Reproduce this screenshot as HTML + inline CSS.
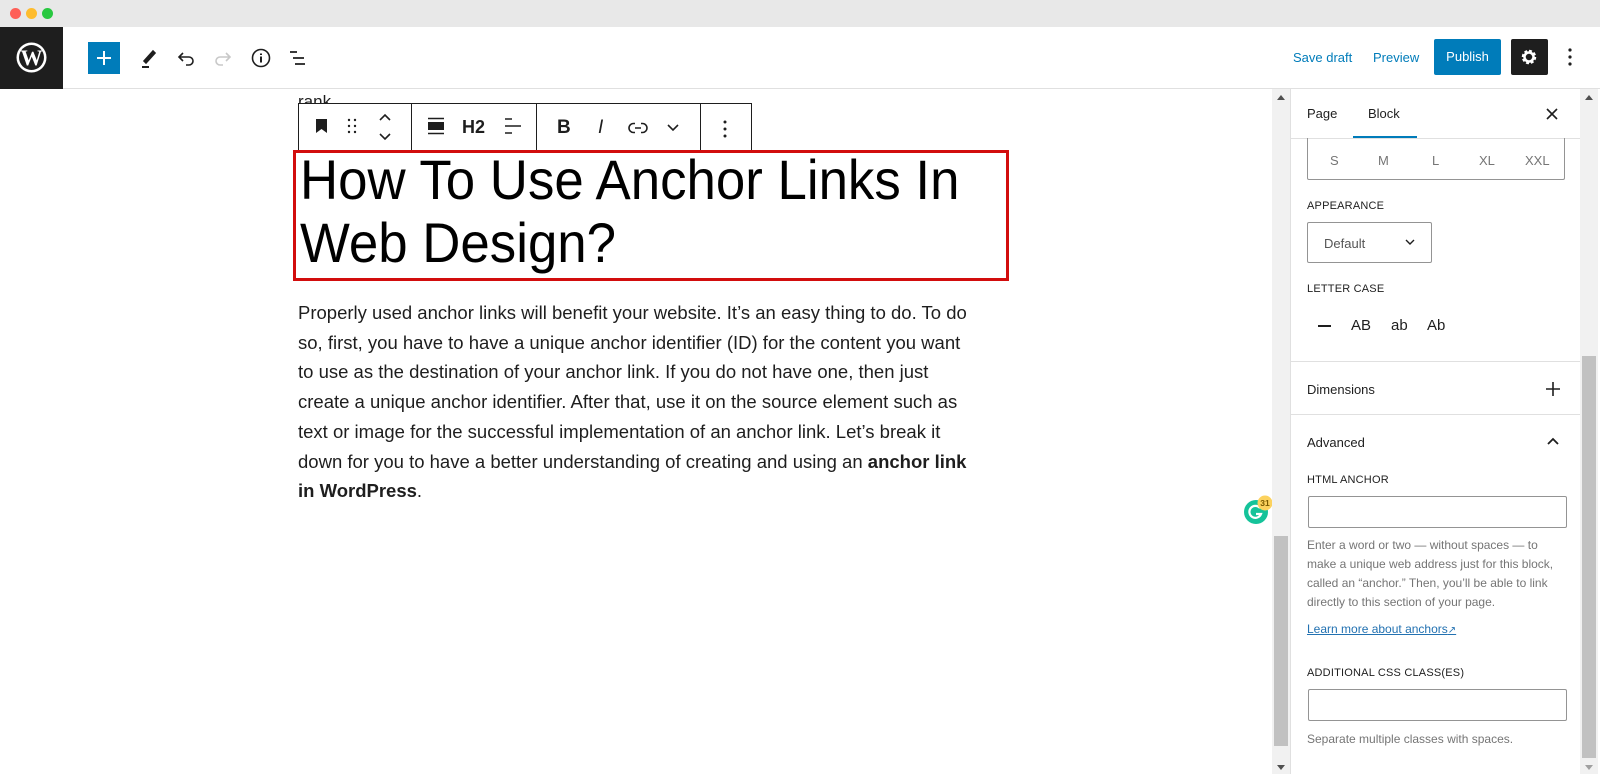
<!DOCTYPE html>
<html><head><meta charset="utf-8"><style>
*{box-sizing:border-box;margin:0;padding:0}
body{width:1600px;height:774px;overflow:hidden;background:#fff;font-family:"Liberation Sans",sans-serif;position:relative;color:#1e1e1e}
.a{position:absolute}
.ic{position:absolute;stroke:#1e1e1e;fill:none;stroke-width:1.6}
.lab{position:absolute;font-size:11px;color:#1e1e1e;letter-spacing:.2px}
.help{position:absolute;left:1307px;font-size:12px;color:#757575;line-height:19px}
.para{position:absolute;left:298px;top:298px;font-size:18.5px;line-height:29.7px;color:#1e1e1e;transform:scaleX(1.0);transform-origin:left top;white-space:nowrap}
</style></head><body>
<div class="a" style="left:0;top:0;width:1600px;height:27px;background:#e8e8e8"></div>
<div class="a" style="left:10px;top:8px;width:11px;height:11px;border-radius:50%;background:#fe5f57"></div>
<div class="a" style="left:26px;top:8px;width:11px;height:11px;border-radius:50%;background:#febc2e"></div>
<div class="a" style="left:42px;top:8px;width:11px;height:11px;border-radius:50%;background:#28c840"></div>
<div class="a" style="left:0;top:88px;width:1600px;height:1px;background:#e0e0e0"></div>
<div class="a" style="left:0;top:27px;width:63px;height:62px;background:#1e1e1e"></div>
<svg class="a" style="left:15px;top:41px" width="33" height="33" viewBox="0 0 33 33"><circle cx="16.5" cy="16.5" r="15" fill="#fff"/><circle cx="16.5" cy="16.5" r="12.5" fill="#1e1e1e"/><text x="16.5" y="24" font-family="Liberation Serif" font-size="22" font-weight="bold" fill="#fff" text-anchor="middle">W</text></svg>
<div class="a" style="left:88px;top:42px;width:32px;height:32px;background:#007cba"></div>
<svg class="a" style="left:94px;top:48px" width="20" height="20"><path d="M10 3v14M3 10h14" stroke="#fff" stroke-width="2"/></svg>
<svg class="ic" style="left:138px;top:46px" width="22" height="24"><path d="M6 15 15 5l2 2-9 10z" fill="#1e1e1e"/><path d="M4 21h7" stroke-width="2"/></svg>
<svg class="ic" style="left:175px;top:48px" width="22" height="20"><path d="M5 9h9a4 4 0 0 1 0 8h-3M8 5 4 9l4 4"/></svg>
<svg class="ic" style="left:212px;top:48px;stroke:#c8c8c8" width="22" height="20"><path d="M17 9H8a4 4 0 0 0 0 8h3M14 5l4 4-4 4"/></svg>
<svg class="ic" style="left:250px;top:47px" width="22" height="22"><circle cx="11" cy="11" r="8.5"/><path d="M11 9.5v6M11 6.5v1.5" stroke-width="2"/></svg>
<svg class="ic" style="left:287px;top:48px" width="22" height="20"><path d="M3 4h7M6 10h11M8 16h10" stroke-width="1.8"/></svg>
<div class="a" style="left:1293px;top:50px;font-size:13px;color:#007cba">Save draft</div>
<div class="a" style="left:1373px;top:50px;font-size:13px;color:#007cba">Preview</div>
<div class="a" style="left:1434px;top:39px;width:67px;height:36px;background:#007cba;border-radius:2px;color:#fff;font-size:13px;text-align:center;line-height:36px">Publish</div>
<div class="a" style="left:1511px;top:39px;width:37px;height:36px;background:#1e1e1e;border-radius:2px"></div>
<svg class="a" style="left:1519px;top:47px" width="20" height="20" viewBox="0 0 20 20"><circle cx="10" cy="10" r="5.5" fill="none" stroke="#fff" stroke-width="3.5" stroke-dasharray="2.6 1.7"/><circle cx="10" cy="10" r="4.5" fill="none" stroke="#fff" stroke-width="2.5"/></svg>
<svg class="a" style="left:1566px;top:46px" width="8" height="22"><circle cx="4" cy="4" r="1.6" fill="#1e1e1e"/><circle cx="4" cy="11" r="1.6" fill="#1e1e1e"/><circle cx="4" cy="18" r="1.6" fill="#1e1e1e"/></svg>

<div class="a" style="left:298px;top:93px;width:50px;height:10px;overflow:hidden;font-size:17px;line-height:17px">rank</div>
<div class="a" style="left:298px;top:103px;width:454px;height:48px;border:1px solid #1e1e1e;border-bottom:none;background:#fff"></div>
<div class="a" style="left:411px;top:103px;width:1px;height:48px;background:#1e1e1e"></div>
<div class="a" style="left:536px;top:103px;width:1px;height:48px;background:#1e1e1e"></div>
<div class="a" style="left:700px;top:103px;width:1px;height:48px;background:#1e1e1e"></div>
<svg class="a" style="left:315px;top:118px" width="14" height="16"><path d="M1 1h11v14l-5.5-4L1 15z" fill="#1e1e1e"/></svg>
<svg class="a" style="left:347px;top:118px" width="10" height="16"><g fill="#1e1e1e"><circle cx="2" cy="2" r="1.2"/><circle cx="8" cy="2" r="1.2"/><circle cx="2" cy="8" r="1.2"/><circle cx="8" cy="8" r="1.2"/><circle cx="2" cy="14" r="1.2"/><circle cx="8" cy="14" r="1.2"/></g></svg>
<svg class="ic" style="left:378px;top:112px" width="14" height="30"><path d="M2 8l5-5 5 5M2 22l5 5 5-5"/></svg>
<svg class="a" style="left:427px;top:117px" width="18" height="18"><rect x="1" y="5" width="16" height="8" fill="#1e1e1e"/><path d="M1 1.5h16M1 16.5h16" stroke="#1e1e1e" stroke-width="1.5"/></svg>
<div class="a" style="left:462px;top:117px;font-size:18px;font-weight:bold">H2</div>
<svg class="ic" style="left:504px;top:117px" width="18" height="18"><path d="M1 2h7M1 9h16M1 16h7"/></svg>
<div class="a" style="left:557px;top:117px;font-size:19px;font-weight:bold">B</div>
<div class="a" style="left:598px;top:117px;font-size:19px;font-style:italic">I</div>
<svg class="ic" style="left:628px;top:120px" width="20" height="16"><path d="M7 3.5H5.5a4.5 4.5 0 0 0 0 9H7M13 3.5h1.5a4.5 4.5 0 0 1 0 9H13M7 8h6"/></svg>
<svg class="ic" style="left:666px;top:123px" width="14" height="10"><path d="M2 2l5 5 5-5"/></svg>
<svg class="a" style="left:722px;top:119px" width="6" height="20"><circle cx="3" cy="3" r="1.5" fill="#1e1e1e"/><circle cx="3" cy="10" r="1.5" fill="#1e1e1e"/><circle cx="3" cy="17" r="1.5" fill="#1e1e1e"/></svg>

<div class="a" style="left:293px;top:150px;width:716px;height:131px;border:3px solid #d20d0d"></div>
<div class="a" style="left:300px;top:148px;font-size:56px;line-height:63px;transform:scaleX(.943);transform-origin:left top;white-space:nowrap;color:#000">How To Use Anchor Links In<br>Web Design?</div>
<div class="para">Properly used anchor links will benefit your website. It’s an easy thing to do. To do<br>so, first, you have to have a unique anchor identifier (ID) for the content you want<br>to use as the destination of your anchor link. If you do not have one, then just<br>create a unique anchor identifier. After that, use it on the source element such as<br>text or image for the successful implementation of an anchor link. Let’s break it<br>down for you to have a better understanding of creating and using an <b>anchor link</b><br><b>in WordPress</b>.</div>

<svg class="a" style="left:1243px;top:495px" width="30" height="30"><circle cx="13" cy="17" r="12" fill="#15c39a"/><path d="M17 13a6 6 0 1 0 1 6h-5" stroke="#fff" stroke-width="2.2" fill="none"/><circle cx="22" cy="8" r="7.5" fill="#fcd25e"/><text x="22" y="11" font-size="8.5" font-weight="bold" fill="#7a5a00" text-anchor="middle" font-family="Liberation Sans">31</text></svg>

<div class="a" style="left:1272px;top:89px;width:18px;height:685px;background:#f1f1f1"></div>
<div class="a" style="left:1274px;top:536px;width:14px;height:210px;background:#c1c1c1"></div>
<div class="a" style="left:1277px;top:95px;border:4px solid transparent;border-bottom:5px solid #505050;border-top:none"></div>
<div class="a" style="left:1277px;top:765px;border:4px solid transparent;border-top:5px solid #505050;border-bottom:none"></div>
<div class="a" style="left:1290px;top:89px;width:1px;height:685px;background:#e0e0e0"></div>
<div class="a" style="left:1580px;top:89px;width:18px;height:685px;background:#f1f1f1"></div>
<div class="a" style="left:1582px;top:356px;width:14px;height:402px;background:#c1c1c1"></div>
<div class="a" style="left:1585px;top:95px;border:4px solid transparent;border-bottom:5px solid #505050;border-top:none"></div>
<div class="a" style="left:1585px;top:765px;border:4px solid transparent;border-top:5px solid #a0a0a0;border-bottom:none"></div>

<div class="a" style="left:1307px;top:106px;font-size:13px">Page</div>
<div class="a" style="left:1368px;top:106px;font-size:13px">Block</div>
<div class="a" style="left:1291px;top:138px;width:289px;height:1px;background:#e0e0e0"></div>
<div class="a" style="left:1353px;top:136px;width:64px;height:2px;background:#007cba"></div>
<svg class="ic" style="left:1545px;top:107px" width="14" height="14"><path d="M2 2l10 10M12 2 2 12"/></svg>
<div class="a" style="left:1307px;top:138px;width:258px;height:42px;border:1px solid #949494;border-top:none;border-radius:0 0 2px 2px"></div>
<div class="a" style="left:1307px;top:153px;width:258px;font-size:13px;color:#757575">
<span class="a" style="left:23px">S</span><span class="a" style="left:71px">M</span><span class="a" style="left:125px">L</span><span class="a" style="left:172px">XL</span><span class="a" style="left:218px">XXL</span></div>
<div class="lab" style="left:1307px;top:200px">APPEARANCE</div>
<div class="a" style="left:1307px;top:222px;width:125px;height:41px;border:1px solid #949494;border-radius:2px"></div>
<div class="a" style="left:1324px;top:236px;font-size:13px;color:#555">Default</div>
<svg class="ic" style="left:1405px;top:239px" width="10" height="7"><path d="M1 1l4 4 4-4" stroke-width="1.4"/></svg>
<div class="lab" style="left:1307px;top:283px">LETTER CASE</div>
<div class="a" style="left:1318px;top:325px;width:13px;height:1.5px;background:#1e1e1e"></div>
<div class="a" style="left:1351px;top:317px;font-size:15px">AB</div>
<div class="a" style="left:1391px;top:317px;font-size:15px">ab</div>
<div class="a" style="left:1427px;top:317px;font-size:15px">Ab</div>
<div class="a" style="left:1291px;top:361px;width:289px;height:1px;background:#e0e0e0"></div>
<div class="a" style="left:1307px;top:382px;font-size:13px">Dimensions</div>
<svg class="ic" style="left:1545px;top:381px" width="16" height="16"><path d="M8 1v14M1 8h14"/></svg>
<div class="a" style="left:1291px;top:414px;width:289px;height:1px;background:#e0e0e0"></div>
<div class="a" style="left:1307px;top:435px;font-size:13px">Advanced</div>
<svg class="ic" style="left:1546px;top:437px" width="14" height="9"><path d="M2 7l5-5 5 5" stroke-width="1.8"/></svg>
<div class="lab" style="left:1307px;top:474px">HTML ANCHOR</div>
<div class="a" style="left:1308px;top:496px;width:259px;height:32px;border:1px solid #949494;border-radius:2px"></div>
<div class="help" style="top:536px">Enter a word or two — without spaces — to<br>make a unique web address just for this block,<br>called an “anchor.” Then, you’ll be able to link<br>directly to this section of your page.</div>
<div class="help" style="top:620px;color:#2271b1;text-decoration:underline">Learn more about anchors<span style="font-size:10px;text-decoration:none">↗</span></div>
<div class="lab" style="left:1307px;top:667px">ADDITIONAL CSS CLASS(ES)</div>
<div class="a" style="left:1308px;top:689px;width:259px;height:32px;border:1px solid #949494;border-radius:2px"></div>
<div class="help" style="top:730px">Separate multiple classes with spaces.</div>
</body></html>
